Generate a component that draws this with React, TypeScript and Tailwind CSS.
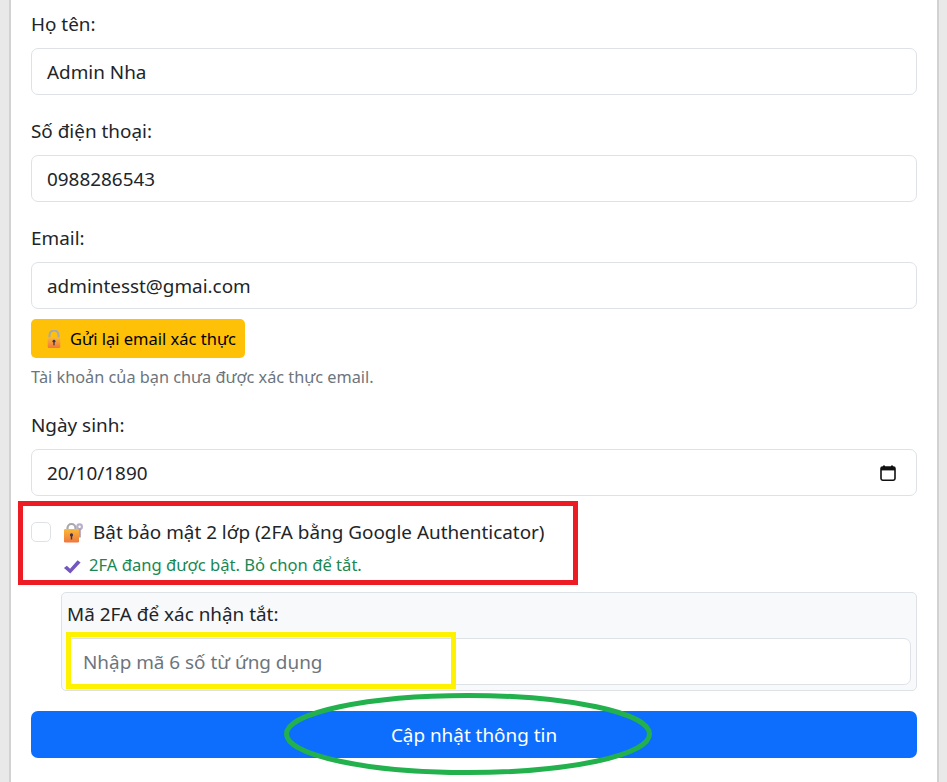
import React from 'react';

const font = { fontFamily: '"Noto Sans", "Open Sans", sans-serif' };

// color lock emoji, with or without the key
const LockIcon = ({ withKey, className }: { withKey?: boolean; className?: string }) => (
  <svg viewBox="0 0 20 20" className={className}>
    <defs>
      <linearGradient id={withKey ? 'lockKey' : 'lockPlain'} x1="0" y1="0" x2="0" y2="1">
        <stop offset="0" stopColor="#fbb934" />
        <stop offset="1" stopColor="#f0763f" />
      </linearGradient>
    </defs>
    {withKey && (
      <g>
        <circle cx="15.6" cy="4.2" r="3.4" fill="#b9aecb" />
        <circle cx="15.6" cy="4.2" r="1.2" fill="#fff" />
        <rect x="14.4" y="6" width="2.4" height="9" fill="#a89cbd" />
      </g>
    )}
    <path
      d={withKey ? 'M3.5 8V5.5a4 4 0 0 1 8 0V8' : 'M5 9V5.5a5 5 0 0 1 10 0V9'}
      fill="none"
      stroke="#a7a7ad"
      strokeWidth="2.2"
    />
    {withKey ? (
      <rect x="0" y="6.5" width="15" height="13.5" rx="1.3" fill="url(#lockKey)" />
    ) : (
      <rect x="3" y="8" width="14" height="12" rx="1.3" fill="url(#lockPlain)" />
    )}
    <circle cx={withKey ? 7.5 : 10} cy="12.4" r="1.6" fill="#3b3550" />
    <rect x={withKey ? 6.8 : 9.3} y="12.4" width="1.4" height="4.6" fill="#3b3550" />
  </svg>
);

const Field = ({ label, value }: { label: string; value: string }) => (
  <div className="mb-5">
    <label className="block mb-2.5 h-[30px] leading-[30px] pt-[1px]">{label}</label>
    <div className="h-[47px] border border-[#dee2e6] rounded-[7px] px-[15px] pt-[2px] flex items-center bg-white">
      {value}
    </div>
  </div>
);

export default function App() {
  return (
    <div className="h-[782px] overflow-hidden bg-[#e9e9e9] text-[#212529] text-[18.9px]" style={font}>
      <div className="relative ml-[9px] w-[930px] h-[782px] bg-white border-x-2 border-[#d2d2d2] px-5 pt-2">
        <Field label="Họ tên:" value="Admin Nha" />
        <Field label="Số điện thoại:" value="0988286543" />

        <div>
          <label className="block mb-2.5 h-[30px] leading-[30px] pt-[1px]">Email:</label>
          <div className="h-[47px] border border-[#dee2e6] rounded-[7px] px-[15px] pt-[2px] flex items-center">
            admintesst@gmai.com
          </div>
          <button className="mt-2.5 h-[39px] w-[214px] bg-[#ffc107] rounded-[5px] text-[16.5px] text-black flex items-center pl-[14px] pt-[1px] gap-[7px]">
            <LockIcon className="w-[18px] h-[18px] shrink-0" />
            Gửi lại email xác thực
          </button>
          <p className="mt-[6px] h-[26px] leading-[26px] text-[16.3px] text-[#6c757d]">
            Tài khoản của bạn chưa được xác thực email.
          </p>
        </div>

        <div className="mt-[19px]">
          <label className="block mb-2.5 h-[30px] leading-[30px] pt-[1px]">Ngày sinh:</label>
          <div className="h-[47px] border border-[#dee2e6] rounded-[7px] px-[15px] pt-[2px] flex items-center justify-between">
            20/10/1890
            <svg viewBox="0 0 16 16" className="w-[16px] h-[16px] mr-[5px] -mt-[2px]" fill="none">
              <path d="M4 0.5V3M12 0.5V3" stroke="#111" strokeWidth="2" />
              <rect x="1" y="2" width="14" height="13.2" rx="1.6" stroke="#111" strokeWidth="1.6" />
              <rect x="1" y="2" width="14" height="3.4" fill="#111" />
            </svg>
          </div>
        </div>

        <div className="mt-[24px] flex items-center h-[24px]">
          <span className="w-5 h-5 border border-[#dee2e6] rounded-[5px] bg-white shrink-0" />
          <LockIcon withKey className="w-[20px] h-[21px] ml-[13px] shrink-0" />
          <span className="ml-[9px]">Bật bảo mật 2 lớp (2FA bằng Google Authenticator)</span>
        </div>
        <div className="mt-[9px] ml-[32px] flex items-center h-[24px] text-[16.6px] text-[#198754]">
          <svg viewBox="0 0 16 14" className="w-[18px] h-[15px] mr-[8px] mt-[2px] shrink-0">
            <path d="M0.5 8.5 L3.2 6.2 L6.2 9 L13.2 1.2 L16 3.2 L6.4 13.6 Z" fill="#7356bf" />
          </svg>
          2FA đang được bật. Bỏ chọn để tắt.
        </div>

        <div className="mt-[15px] ml-[30px] h-[99px] bg-[#f8f9fa] border border-[#dee2e6] rounded-[5px] px-[5px]">
          <label className="block h-[30px] leading-[30px] mt-[6px]">Mã 2FA để xác nhận tắt:</label>
          <div className="mt-[9px] h-[47px] border border-[#dee2e6] rounded-[7px] px-[15px] pt-[2px] flex items-center bg-white text-[#6c757d]">
            Nhập mã 6 số từ ứng dụng
          </div>
        </div>

        <button className="mt-5 w-full h-[47px] pt-[2px] bg-[#0d6efd] text-white rounded-[7px]">Cập nhật thông tin</button>

        {/* hand-drawn annotations over the screenshot */}
        <div className="absolute left-[7px] top-[501px] w-[560px] h-[84px] border-[5px] border-[#ed1c24]" />
        <div className="absolute left-[55px] top-[632px] w-[390px] h-[57px] border-[5px] border-[#fff200]" />
        <svg className="absolute left-[273px] top-[693px] w-[368px] h-[82px]" viewBox="0 0 368 82">
          <ellipse cx="184" cy="41" rx="181.5" ry="38.5" fill="none" stroke="#22b14c" strokeWidth="5" />
        </svg>
      </div>
    </div>
  );
}
